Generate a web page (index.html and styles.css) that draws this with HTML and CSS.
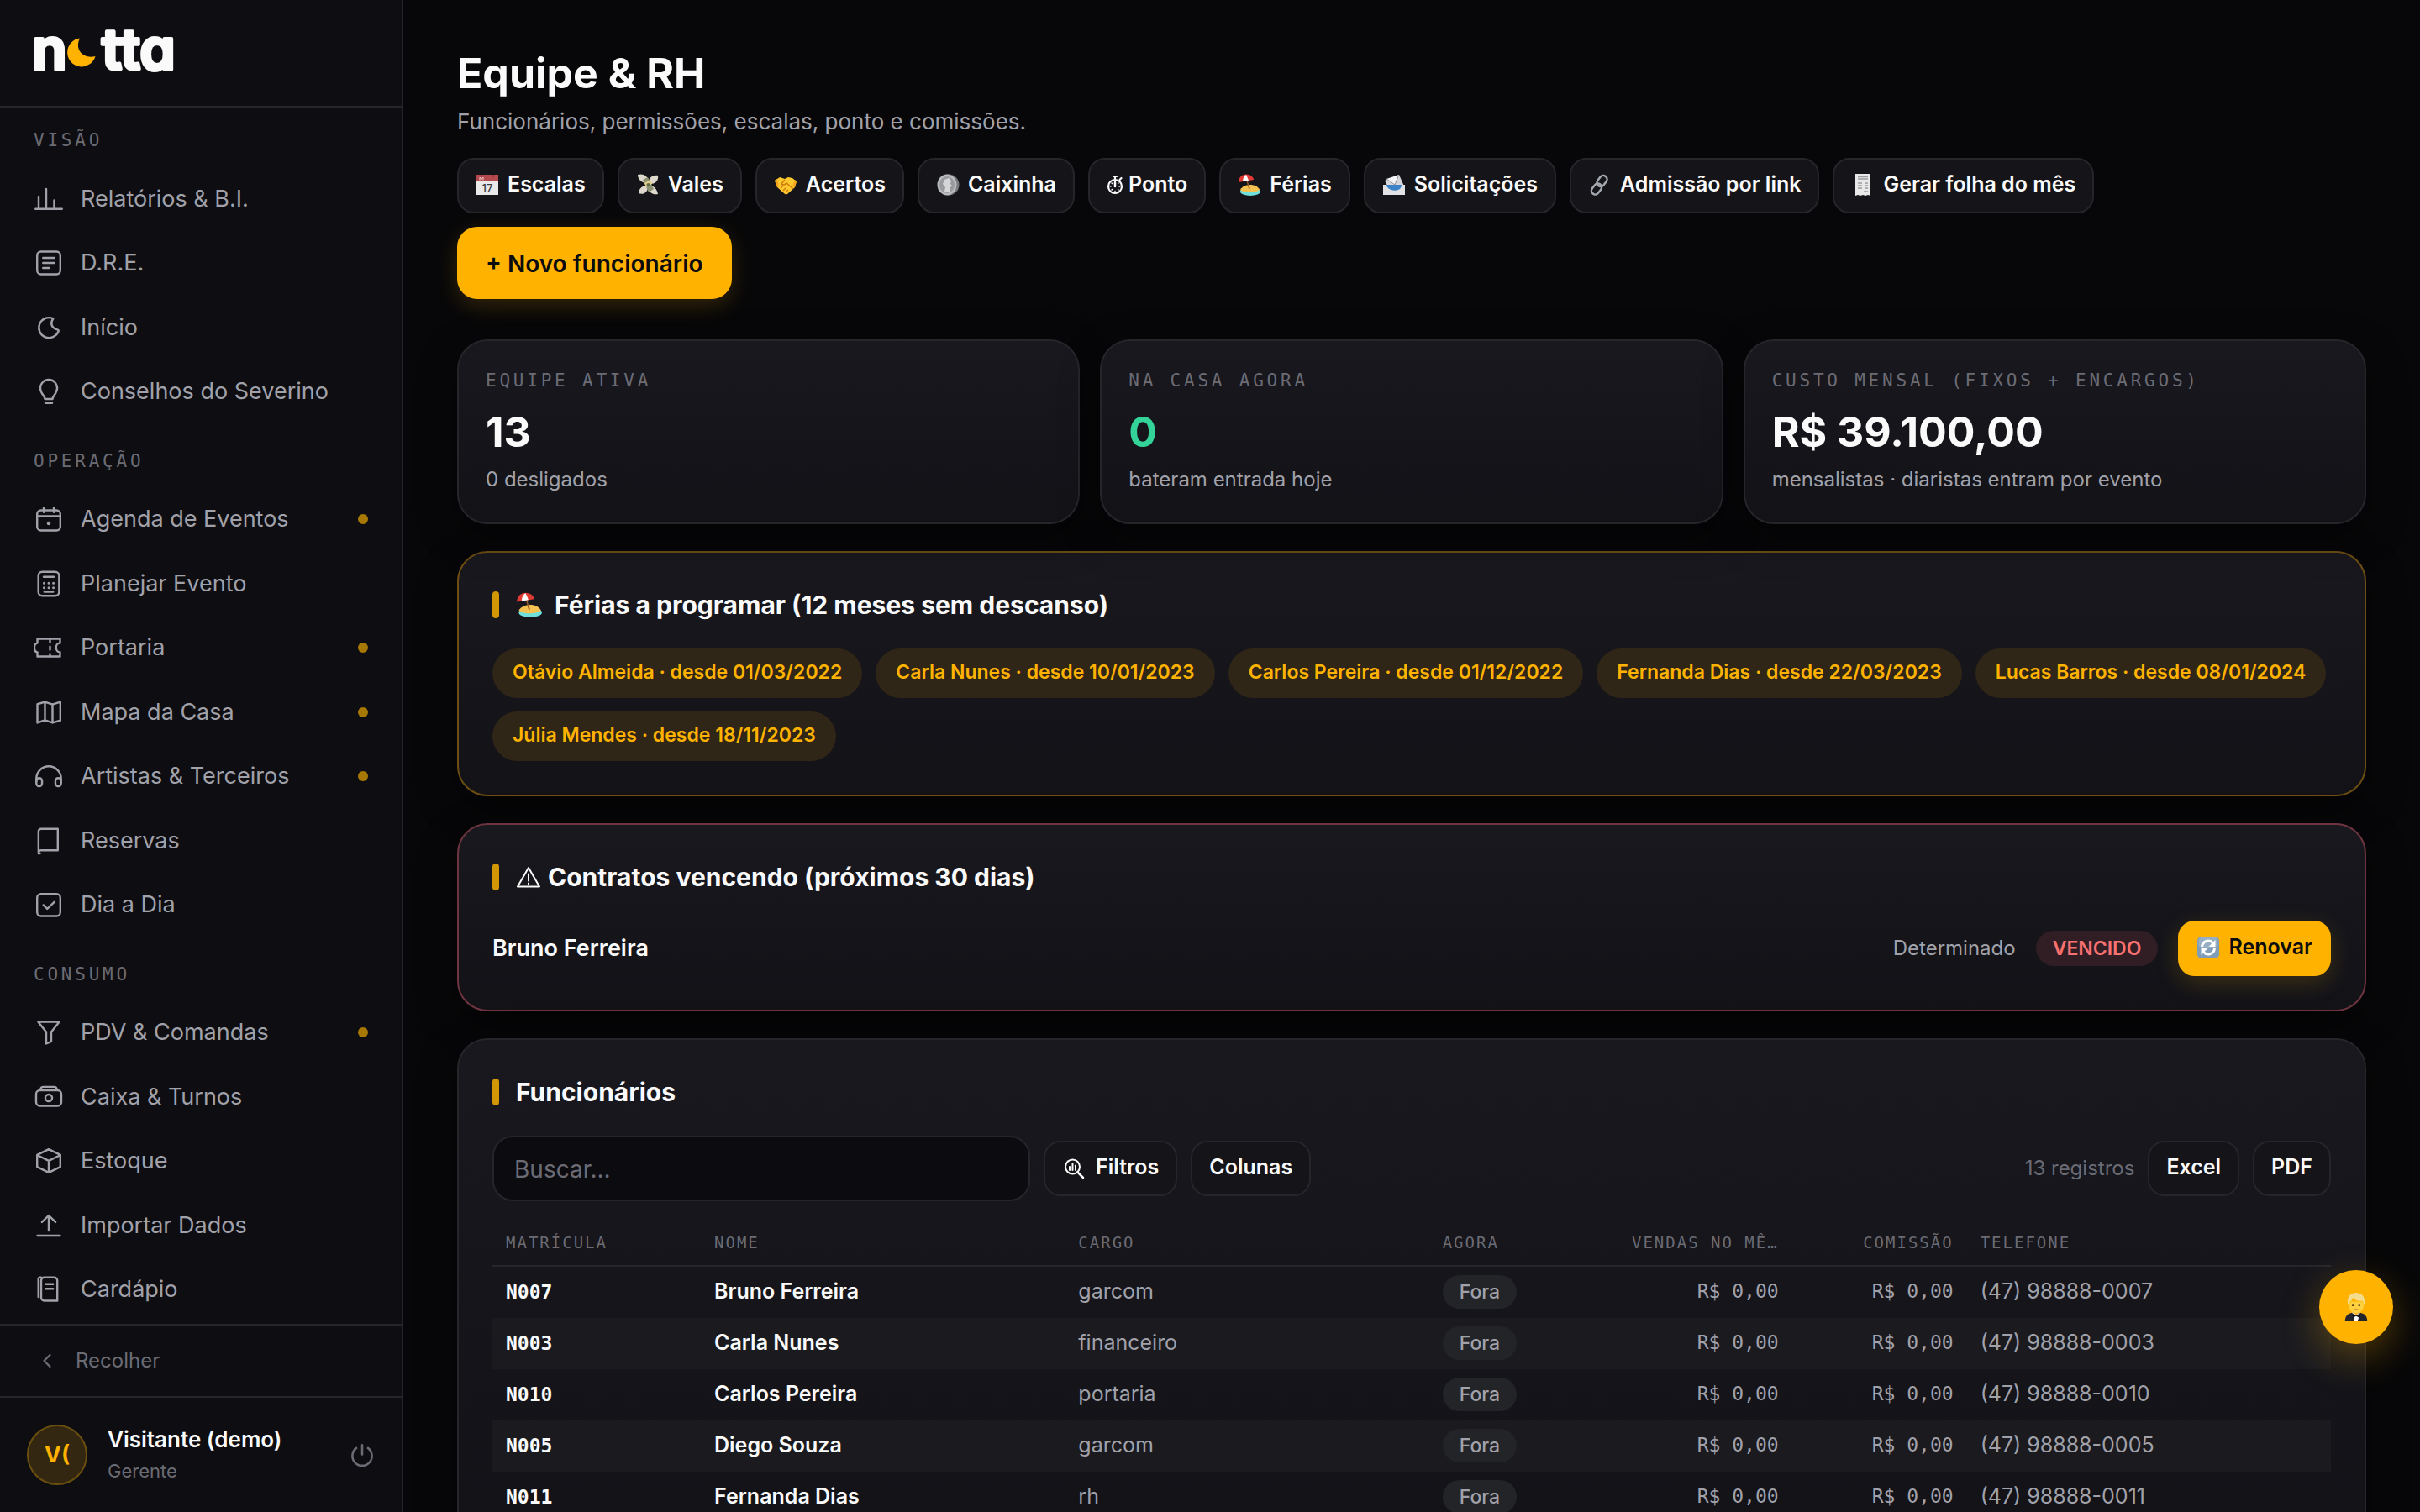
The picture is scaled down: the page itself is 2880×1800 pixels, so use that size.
FILE: index.html
```html
<!DOCTYPE html>
<html lang="pt-BR">
<head>
<meta charset="utf-8">
<meta name="viewport" content="width=device-width, initial-scale=1">
<title>Equipe &amp; RH</title>
<link rel="stylesheet" href="styles.css">
</head>
<body>
<div class="app">
  <aside class="sidebar">
    <header class="brand">
      <svg class="logo" width="184" height="60" viewBox="0 0 184 60" role="img" aria-label="notta">
        <text class="logo-text" x="-2" y="50">n</text>
        <path fill="#ffb300" d="M55 12.500A17 17 0 1 0 73.500 34C60 37.500 48 27 55 12.500z"/>
        <text class="logo-text" x="81" y="50">tta</text>
      </svg>
    </header>
    <nav class="nav">
      <h2 class="nav-label">Visão</h2>
      <a class="nav-item" href="#"><svg class="icon" viewBox="0 0 24 24"><path d="M1.500 19.800h21M4 19.500V10M10 19.500V4M16.300 19.500V13"/></svg>Relatórios &amp; B.I.</a>
      <a class="nav-item" href="#"><svg class="icon" viewBox="0 0 24 24"><rect x="2.800" y="3" width="18.400" height="18" rx="3"/><path d="M7.500 8h9M7.500 12h9M7.500 16h5"/></svg>D.R.E.</a>
      <a class="nav-item" href="#"><svg class="icon" viewBox="0 0 24 24"><path d="M15 4.600A8 8 0 1 0 19.600 15.200C20.300 14.300 19.600 13.800 18.700 13.600 14.600 12.600 13 9 15 5.800 15.500 5 15.800 4.700 15 4.600z"/></svg>Início</a>
      <a class="nav-item" href="#"><svg class="icon" viewBox="0 0 24 24"><path d="M9 18c0-2.600-3.700-4.200-3.700-8.600a6.700 6.700 0 0 1 13.400 0c0 4.400-3.700 6-3.700 8.600zM9.300 21.200h5.400"/></svg>Conselhos do Severino</a>

      <h2 class="nav-label">Operação</h2>
      <a class="nav-item" href="#"><svg class="icon" viewBox="0 0 24 24"><rect x="2.800" y="5" width="18.400" height="16" rx="3"/><path d="M3 9.700h18M8 3v3.500M16 3v3.500"/><circle class="fill" cx="12" cy="15.400" r="1.500"/></svg>Agenda de Eventos<span class="dot"></span></a>
      <a class="nav-item" href="#"><svg class="icon" viewBox="0 0 24 24"><rect x="3.800" y="2.500" width="16.400" height="19" rx="3"/><path d="M8 6.500h8M8.500 18.300h7"/><path stroke-width="2" d="M8.300 11.500h.010M12 11.500h.010M15.700 11.500h.010M8.300 15.200h.010M12 15.200h.010M15.700 15.200h.010"/></svg>Planejar Evento</a>
      <a class="nav-item" href="#"><svg class="icon" viewBox="0 0 24 24"><path d="M3 5h18v3.400c-4.200 0-4.200 7.200 0 7.200V19H3v-3.400C-.200 15.200-.200 8.800 3 8.400z"/><path stroke-dasharray="2.500 3.200" d="M13 5.500V19"/></svg>Portaria<span class="dot"></span></a>
      <a class="nav-item" href="#"><svg class="icon" viewBox="0 0 24 24"><path d="M3 5.500L9 3.700l6 2 6.200-2v14.800L15 20.300l-6-2-6 2zM9 3.700v14.600M15 5.700v14.600"/></svg>Mapa da Casa<span class="dot"></span></a>
      <a class="nav-item" href="#"><svg class="icon" viewBox="0 0 24 24"><path d="M2.200 16.500V14a9.800 9.800 0 0 1 19.600 0v2.500"/><rect x="2.200" y="13.500" width="4.500" height="6.600" rx="2.200"/><rect x="17.300" y="13.500" width="4.500" height="6.600" rx="2.200"/></svg>Artistas &amp; Terceiros<span class="dot"></span></a>
      <a class="nav-item" href="#"><svg class="icon" viewBox="0 0 24 24"><path d="M5 22H3.900V4.500a2 2 0 0 1 2-2h13.300v17H6a2 2 0 0 0-2 1.500"/></svg>Reservas</a>
      <a class="nav-item" href="#"><svg class="icon" viewBox="0 0 24 24"><rect x="2.800" y="3.500" width="18.400" height="17.500" rx="3"/><path d="M7.800 12.300l3 3 5.600-5.400"/></svg>Dia a Dia</a>

      <h2 class="nav-label">Consumo</h2>
      <a class="nav-item" href="#"><svg class="icon" viewBox="0 0 24 24"><path d="M3.600 3.700h16.800l-6.400 8v7.600l-4 1.700v-9.300z"/></svg>PDV &amp; Comandas<span class="dot"></span></a>
      <a class="nav-item" href="#"><svg class="icon" viewBox="0 0 24 24"><rect x="2" y="6.700" width="20" height="12.300" rx="3"/><path d="M5.500 6.500c0-1.800.700-2.600 2.300-2.600h8.400c1.600 0 2.300.8 2.300 2.600"/><circle cx="12" cy="12.700" r="2.700"/></svg>Caixa &amp; Turnos</a>
      <a class="nav-item" href="#"><svg class="icon" viewBox="0 0 24 24"><path d="M12 2.800l9.200 4.500v9.400L12 21.200l-9.200-4.500V7.300zM3 7.500l9 4.400 9-4.400M12 12v9"/></svg>Estoque</a>
      <a class="nav-item" href="#"><svg class="icon" viewBox="0 0 24 24"><path d="M3 20h18M12 16V4M6.600 9.300L12 4l5.400 5.300"/></svg>Importar Dados</a>
      <a class="nav-item" href="#"><svg class="icon" viewBox="0 0 24 24"><path d="M6 5a2.500 2.500 0 0 1 2.500-2.500h7.800a2.500 2.500 0 0 1 2.500 2.500v16H8.500A2.500 2.500 0 0 1 6 18.500zM6 2.500H5.200A1.500 1.500 0 0 0 3.800 4v14M9.500 7.800h6M9.500 11.500h6"/></svg>Cardápio</a>
    </nav>
    <button class="collapse" type="button"><svg class="icon-small" viewBox="0 0 24 24"><path d="M15 6l-6 6 6 6"/></svg>Recolher</button>
    <footer class="user">
      <span class="avatar">V(</span>
      <div class="user-text"><strong>Visitante (demo)</strong><span>Gerente</span></div>
      <button class="power" type="button" aria-label="Sair"><svg class="icon-power" viewBox="0 0 24 24"><path d="M12 2.500v9M6.500 5.500a9.300 9.300 0 1 0 11 0"/></svg></button>
    </footer>
  </aside>

  <main class="main">
    <header class="page-head">
      <h1>Equipe &amp; RH</h1>
      <p>Funcionários, permissões, escalas, ponto e comissões.</p>
      <div class="actions">
        <button class="btn" type="button"><svg class="emoji" viewBox="0 0 28 28"><path fill="#e9e9ea" d="M1 2h26v24H1z"/><path fill="#b4494e" d="M1 2h26v8H1z"/><path stroke="#f0c9ca" fill="none" d="M5 8.500V5l2 2.500L9 5v3.500"/><circle cx="7" cy="3.500" r="1" fill="#5c1d20"/><circle cx="21" cy="3.500" r="1" fill="#5c1d20"/><text x="14" y="23" class="cal-day">17</text></svg>Escalas</button>
        <button class="btn" type="button"><svg class="emoji" viewBox="0 0 28 28"><path fill="#ddd8cb" d="M13 12C7 12 2 8 2 2c6-2 12 1 13 8zM15 11c0-5 4-9 11-8 1 6-3 10-9 10zM12 15c-5 0-9 4-9 9 5 2 10 0 11-6zM16 15c5 0 9 4 10 10-6 1-10-1-11-7z"/><path fill="#8b9272" d="M8 8l6-3 7 14-6 4z"/><path fill="#e6cf8c" d="M10 12l7-4 2 5-7 4z"/><circle cx="14.500" cy="14" r="2" fill="#5b6a4a"/></svg>Vales</button>
        <button class="btn" type="button"><svg class="emoji" viewBox="0 0 28 28"><path fill="#ffc72e" d="M1 9l6-4 6 2 4-2 5 1 5 4-2 7-9 8c-2 1-3 0-4-1l-8-7z"/><path fill="none" stroke="#c97a0a" stroke-width="1.300" d="M13 8l-4 5c2 2 4 1 6-1l8 7M8 18l3-3M11 21l3-3M14 23l3-3"/><path fill="#f2a51c" d="M1 9l3-2 2 9-2 1zM27 10l-2-2-3 8 3 1z"/></svg>Acertos</button>
        <button class="btn" type="button"><svg class="emoji" viewBox="0 0 28 28"><ellipse cx="15" cy="14" rx="12.500" ry="12.500" fill="#77797c"/><ellipse cx="13" cy="14" rx="11.500" ry="12.500" fill="#b9bbbd"/><ellipse cx="13" cy="14" rx="9" ry="10" fill="#989a9d"/><path fill="#d5d6d8" d="M10 22l1-5-3-4 2-5 5-2 3 3-1 4 2 2-2 2v5z"/></svg>Caixinha</button>
        <button class="btn btn-tight" type="button"><svg class="glyph" viewBox="0 0 20 28"><circle cx="10" cy="16" r="8" stroke-width="2.200"/><path stroke-width="2.200" d="M8 4h4M10 4v4M15.500 8l2-2"/><path stroke-width="2.500" d="M10 16v-5"/><path stroke-width="1.500" d="M10 21.500v.5M4.500 16H5M15 16h.500M6 12l.4.400M14 12l-.4.400M6 20l.4-.4M14 20l-.4-.4"/></svg>Ponto</button>
        <button class="btn" type="button"><svg class="emoji" viewBox="0 0 28 28"><ellipse cx="15" cy="22" rx="12" ry="5" fill="#6fe0dc"/><path fill="#f5c151" d="M3 20c4-8 20-8 23 0-4 4-19 4-23 0z"/><path stroke="#8a5a2b" stroke-width="1.500" d="M10 6l4 13"/><path fill="#e03a32" d="M1 11C1 4 7 0 13 2c4 1 6 4 6 6z"/><path fill="#fff" d="M6 10C6 6 8 3 10 2c1 2 2 4 3 7z"/></svg>Férias</button>
        <button class="btn" type="button"><svg class="emoji" viewBox="0 0 28 28"><path fill="#d6d7da" d="M3 9l17-7 7 16-17 5z"/><path fill="#f2f3f5" d="M5 7l15-5-6 12z"/><path stroke="#8f9297" fill="none" d="M5 7l10 7 5-12"/><path fill="#e2e2e4" d="M1 14h26v12H1z"/><path fill="#3b82c9" d="M4 14h20l-3 5c-5 3-10 2-14-1z"/></svg>Solicitações</button>
        <button class="btn" type="button"><svg class="emoji" viewBox="0 0 28 28"><g fill="none" stroke="#a4a8ae" stroke-width="2.500"><rect x="12" y="2.500" width="9" height="14" rx="4.500" transform="rotate(38 16.500 9.500)"/><rect x="5.500" y="12" width="9" height="14" rx="4.500" transform="rotate(38 10 19)"/></g></svg>Admissão por link</button>
        <button class="btn" type="button"><svg class="emoji" viewBox="0 0 28 28"><path fill="#e8e8e8" d="M5 1h18v26l-3-1-3 1-3-1-3 1-3-1-3 1z"/><path stroke="#9a9ca0" stroke-width="1.500" d="M8 4.500h12M8 7h12M8 12h5M17 12h3M8 15h5M17 15h3M8 18h5M17 18h3M15 22h5"/></svg>Gerar folha do mês</button>
        <button class="btn-primary" type="button">+ Novo funcionário</button>
      </div>
    </header>

    <section class="stats">
      <article class="card stat"><h3>Equipe ativa</h3><strong>13</strong><p>0 desligados</p></article>
      <article class="card stat"><h3>Na casa agora</h3><strong class="green">0</strong><p>bateram entrada hoje</p></article>
      <article class="card stat"><h3>Custo mensal (fixos + encargos)</h3><strong>R$ 39.100,00</strong><p>mensalistas · diaristas entram por evento</p></article>
    </section>

    <section class="card panel panel-amber">
      <h2 class="title"><svg class="emoji-title" viewBox="0 0 28 28"><ellipse cx="15" cy="22" rx="12" ry="5" fill="#6fe0dc"/><path fill="#f5c151" d="M3 20c4-8 20-8 23 0-4 4-19 4-23 0z"/><path stroke="#8a5a2b" stroke-width="1.500" d="M10 6l4 13"/><path fill="#e03a32" d="M1 11C1 4 7 0 13 2c4 1 6 4 6 6z"/><path fill="#fff" d="M6 10C6 6 8 3 10 2c1 2 2 4 3 7z"/></svg>Férias a programar (12 meses sem descanso)</h2>
      <div class="chips">
        <span class="chip">Otávio Almeida · desde 01/03/2022</span>
        <span class="chip">Carla Nunes · desde 10/01/2023</span>
        <span class="chip">Carlos Pereira · desde 01/12/2022</span>
        <span class="chip">Fernanda Dias · desde 22/03/2023</span>
        <span class="chip">Lucas Barros · desde 08/01/2024</span>
        <span class="chip">Júlia Mendes · desde 18/11/2023</span>
      </div>
    </section>

    <section class="card panel panel-red">
      <h2 class="title"><svg class="warn" viewBox="0 0 30 28"><path stroke-width="2" d="M15 3L28 25.500H2zM15 10.500v8M15 21.500v1.500"/></svg>Contratos vencendo (próximos 30 dias)</h2>
      <div class="contract">
        <strong>Bruno Ferreira</strong>
        <span class="kind">Determinado</span>
        <span class="badge-red">VENCIDO</span>
        <button class="btn btn-amber" type="button"><svg class="emoji" viewBox="0 0 28 28"><rect x="1" y="1" width="26" height="26" rx="5" fill="#7f9db8"/><rect x="2.500" y="2" width="23" height="12" rx="4" fill="#96afc5"/><path fill="none" stroke="#fff" stroke-width="3" d="M6.500 13a7.500 7.500 0 0 1 13-4.500M21.500 15a7.500 7.500 0 0 1-13 4.500"/><path fill="#fff" d="M22.500 5v8h-8zM5.500 23v-8h8z"/></svg>Renovar</button>
      </div>
    </section>

    <section class="card panel">
      <h2 class="title">Funcionários</h2>
      <div class="toolbar">
        <input class="search" type="search" placeholder="Buscar..." aria-label="Buscar funcionários">
        <button class="btn btn-filter" type="button"><svg class="emoji filter-icon" viewBox="0 0 28 28"><circle cx="12.500" cy="13" r="8.500" stroke-width="2"/><path stroke-width="2.500" d="M18.500 19.500l6.500 6.500"/><path stroke-width="2" d="M9 17v-4M12.500 17V9M16 17v-5.500"/></svg>Filtros</button>
        <button class="btn" type="button">Colunas</button>
        <span class="count">13 registros</span>
        <button class="btn" type="button">Excel</button>
        <button class="btn" type="button">PDF</button>
      </div>
      <table class="grid">
        <colgroup><col class="c-id"><col><col><col class="c-now"><col class="c-sales"><col class="c-com"><col></colgroup>
        <thead>
          <tr><th>Matrícula</th><th>Nome</th><th>Cargo</th><th>Agora</th><th class="num">Vendas no mê…</th><th class="num">Comissão</th><th>Telefone</th></tr>
        </thead>
        <tbody>
          <tr><td class="id">N007</td><td class="name">Bruno Ferreira</td><td>garcom</td><td><span class="badge">Fora</span></td><td class="num">R$ 0,00</td><td class="num">R$ 0,00</td><td>(47) 98888-0007</td></tr>
          <tr><td class="id">N003</td><td class="name">Carla Nunes</td><td>financeiro</td><td><span class="badge">Fora</span></td><td class="num">R$ 0,00</td><td class="num">R$ 0,00</td><td>(47) 98888-0003</td></tr>
          <tr><td class="id">N010</td><td class="name">Carlos Pereira</td><td>portaria</td><td><span class="badge">Fora</span></td><td class="num">R$ 0,00</td><td class="num">R$ 0,00</td><td>(47) 98888-0010</td></tr>
          <tr><td class="id">N005</td><td class="name">Diego Souza</td><td>garcom</td><td><span class="badge">Fora</span></td><td class="num">R$ 0,00</td><td class="num">R$ 0,00</td><td>(47) 98888-0005</td></tr>
          <tr><td class="id">N011</td><td class="name">Fernanda Dias</td><td>rh</td><td><span class="badge">Fora</span></td><td class="num">R$ 0,00</td><td class="num">R$ 0,00</td><td>(47) 98888-0011</td></tr>
        </tbody>
      </table>
    </section>
  </main>

  <button class="fab" type="button" aria-label="Severino"><svg width="34" height="36" viewBox="0 0 36 36"><path fill="#22252c" d="M4 36c0-8 5-11 14-11s14 3 14 11z"/><path fill="#fff" d="M13 25h10l-3 11h-4z"/><path fill="#16181d" d="M13 26l5 2.500 5-2.500v6l-5-2.500-5 2.500z"/><path fill="#f2b632" d="M14 20h8v6l-4 2-4-2z"/><path fill="#ffd03d" d="M8.500 11h19v5c0 6-4 9.500-9.500 9.500S8.500 22 8.500 16z"/><path fill="#f3dc8b" d="M7.500 15C6 5 11 0 18 0s12 5 10.500 15l-2-5C20 11 16 9 14 6c-1 4-3 5-4.500 5z"/><circle cx="14" cy="15.500" r="1.500" fill="#4a3010"/><circle cx="22" cy="15.500" r="1.500" fill="#4a3010"/><path fill="none" stroke="#a5502b" stroke-width="1.500" d="M15.500 21.500h5"/></svg></button>
</div>
</body>
</html>
```

FILE: styles.css
```css
:root {
  --bg: #070709;
  --panel: #0e0e12;
  --line: #25252a;
  --text: #fafafa;
  --muted: #a1a1aa;
  --faint: #6b6b74;
  --amber: #ffb300;
  --mono: "DejaVu Sans Mono", "Liberation Mono", monospace;
}
* { box-sizing: border-box; }
body {
  margin: 0;
  background: var(--bg);
  color: var(--text);
  font: 27px/1.5 Inter, "Liberation Sans", sans-serif;
}
h1, h2, h3, p { margin: 0; }
button { font: inherit; color: inherit; cursor: pointer; }
svg { flex: none; }

.app { display: flex; height: 100vh; }

/* Sidebar */
.sidebar {
  display: flex;
  flex: none;
  flex-direction: column;
  width: 480px;
  background: var(--panel);
  border-right: 2px solid var(--line);
}
.brand {
  display: flex;
  flex: none;
  align-items: center;
  height: 128px;
  padding: 0 40px;
  border-bottom: 2px solid var(--line);
}
.logo { overflow: visible; }
.logo-text {
  fill: var(--text);
  stroke: var(--text);
  stroke-width: 4px;
  stroke-linejoin: round;
  font-size: 68px;
  font-weight: 600;
  font-feature-settings: "cv11";
}
.nav { flex: 1; min-height: 0; padding-top: 24px; overflow: hidden; }
.nav-label {
  padding: 29px 40px 15px;
  color: var(--faint);
  font: 21px/1.5 var(--mono);
  letter-spacing: 0.18em;
  text-transform: uppercase;
}
.nav-label:first-child { padding-top: 0; }
.nav-item {
  display: flex;
  align-items: center;
  gap: 20px;
  padding: 18px 40px;
  color: var(--muted);
  text-decoration: none;
}
.icon { width: 36px; height: 36px; }
.icon, .icon-small, .icon-power, .glyph, .warn, .filter-icon {
  fill: none;
  stroke: currentColor;
  stroke-width: 1.6;
  stroke-linecap: round;
  stroke-linejoin: round;
}
.icon .fill { fill: currentColor; stroke: none; }
.dot { width: 12px; height: 12px; margin-left: auto; border-radius: 50%; background: #a87805; }
.collapse {
  display: flex;
  flex: none;
  align-items: center;
  gap: 20px;
  height: 86px;
  padding: 0 42px;
  background: none;
  border: 0;
  border-top: 2px solid var(--line);
  color: var(--faint);
  font-size: 24px;
}
.icon-small { width: 28px; height: 28px; stroke-width: 2; }
.user {
  display: flex;
  flex: none;
  align-items: center;
  gap: 24px;
  height: 138px;
  padding: 0 32px;
  border-top: 2px solid var(--line);
}
.avatar {
  display: grid;
  place-items: center;
  width: 72px;
  height: 72px;
  border: 2px solid #6b4f0e;
  border-radius: 50%;
  background: #332711;
  color: var(--amber);
  font-size: 27px;
  font-weight: 700;
}
.user-text { display: grid; flex: 1; }
.user-text strong { font-size: 26px; font-weight: 600; line-height: 38px; }
.user-text span { color: var(--faint); font-size: 22px; line-height: 36px; }
.power { display: flex; padding: 0; background: none; border: 0; color: var(--faint); }
.icon-power { width: 30px; height: 30px; stroke-width: 2; }

/* Page */
.main { flex: 1; min-width: 0; padding: 54px 64px; overflow-y: auto; scrollbar-width: none; }
h1 { font-size: 50px; font-weight: 700; line-height: 66px; }
.page-head p { margin-top: 5px; color: var(--muted); font-size: 26px; line-height: 40px; }
.actions { display: flex; flex-wrap: wrap; align-items: center; gap: 16px; margin: 23px 0 48px; }
.btn {
  display: inline-flex;
  flex: none;
  align-items: center;
  gap: 10px;
  height: 66px;
  padding: 0 20px 2px;
  background: #141419;
  border: 2px solid var(--line);
  border-radius: 20px;
  font-size: 25px;
  font-weight: 600;
  white-space: nowrap;
}
.btn-tight { gap: 6px; }
.btn-filter { gap: 12px; }
.emoji { width: 28px; height: 28px; }
.cal-day { fill: #3b3b3f; font-size: 13px; font-weight: 500; text-anchor: middle; }
.glyph { width: 20px; height: 28px; }
.btn-primary {
  height: 86px;
  padding: 2px 34px 0;
  background: var(--amber);
  border: 0;
  border-radius: 24px;
  box-shadow: 0 8px 28px rgba(255, 179, 0, 0.18);
  color: #0c0c0e;
  font-size: 28px;
  font-weight: 600;
}
.btn-amber {
  background: var(--amber);
  border-color: var(--amber);
  box-shadow: 0 8px 28px rgba(255, 179, 0, 0.18);
  color: #0c0c0e;
}

.card {
  background: linear-gradient(#18181e, #121217);
  border: 2px solid var(--line);
  border-radius: 36px;
  box-shadow: 0 16px 48px rgba(0, 0, 0, 0.4);
}
.stats { display: grid; grid-template-columns: repeat(3, 1fr); gap: 24px; }
.stat { display: grid; height: 220px; padding: 33px 32px 30px; align-content: start; }
.stat h3 {
  color: var(--faint);
  font: 21px/28px var(--mono);
  letter-spacing: 0.18em;
  text-transform: uppercase;
}
.stat strong { margin: 14px 0 6px; font-size: 50px; font-weight: 700; line-height: 66px; }
.stat .green { color: #34d399; }
.stat p { color: var(--muted); font-size: 24px; }

.panel { margin-top: 32px; padding: 40px; }
.panel-amber { border-color: #6d4e12; }
.panel-red { border-color: #6e3540; }
.title {
  display: flex;
  align-items: center;
  height: 44px;
  margin-bottom: 30px;
  font-size: 30px;
  font-weight: 700;
}
.title::before {
  width: 8px;
  height: 32px;
  margin-right: 20px;
  border-radius: 4px;
  background: #d39605;
  content: "";
}
.emoji-title { width: 32px; height: 32px; margin-right: 14px; }
.warn { width: 30px; height: 28px; margin-right: 8px; }
.chips { display: flex; flex-wrap: wrap; gap: 16px; }
.chip {
  padding: 10px 24px 13px;
  border-radius: 30px;
  background: #302617;
  color: var(--amber);
  font-size: 23px;
  font-weight: 600;
  line-height: 36px;
}
.contract { display: flex; align-items: center; gap: 24px; }
.contract strong { flex: 1; font-weight: 600; }
.kind { color: var(--muted); font-size: 24px; }
.badge-red {
  padding: 0 20px;
  border-radius: 21px;
  background: #301e24;
  color: #f87171;
  font-size: 23px;
  font-weight: 600;
  line-height: 42px;
}

.toolbar { display: flex; align-items: center; gap: 16px; }
.search {
  width: 640px;
  height: 78px;
  padding: 2px 24px 0;
  background: #0c0c10;
  border: 2px solid var(--line);
  border-radius: 24px;
  color: var(--text);
  font: 28px Inter, "Liberation Sans", sans-serif;
}
.search::placeholder { color: var(--faint); opacity: 1; }
.count { margin-left: auto; color: var(--faint); font-size: 24px; }

.grid { width: 100%; margin-top: 20px; border-collapse: separate; border-spacing: 0; table-layout: fixed; }
.c-id { width: 248px; }
.c-now, .c-sales { width: 216px; }
.c-com { width: 208px; }
.grid th {
  height: 58px;
  padding: 2px 16px 0;
  border-bottom: 2px solid var(--line);
  color: var(--faint);
  font: 19px/28px var(--mono);
  letter-spacing: 2px;
  text-align: left;
  text-transform: uppercase;
  white-space: nowrap;
}
.grid td { height: 61px; padding: 0 16px 2px; color: var(--muted); font-size: 25px; }
.grid tbody tr:nth-child(even) { background: #1a1a1f; }
.grid .id { color: var(--text); font: 700 23px var(--mono); }
.grid .name { color: var(--text); font-weight: 600; }
.grid .num { text-align: right; }
.grid td.num { font-family: var(--mono); font-size: 23px; }
.badge {
  display: inline-block;
  padding: 0 20px;
  border-radius: 20px;
  background: #232428;
  font-size: 23px;
  font-weight: 500;
  line-height: 40px;
}

.fab {
  position: fixed;
  right: 32px;
  bottom: 200px;
  display: grid;
  place-items: center;
  width: 88px;
  height: 88px;
  padding: 0;
  background: var(--amber);
  border: 0;
  border-radius: 50%;
  box-shadow: 0 16px 48px rgba(255, 179, 0, 0.3);
}
```
